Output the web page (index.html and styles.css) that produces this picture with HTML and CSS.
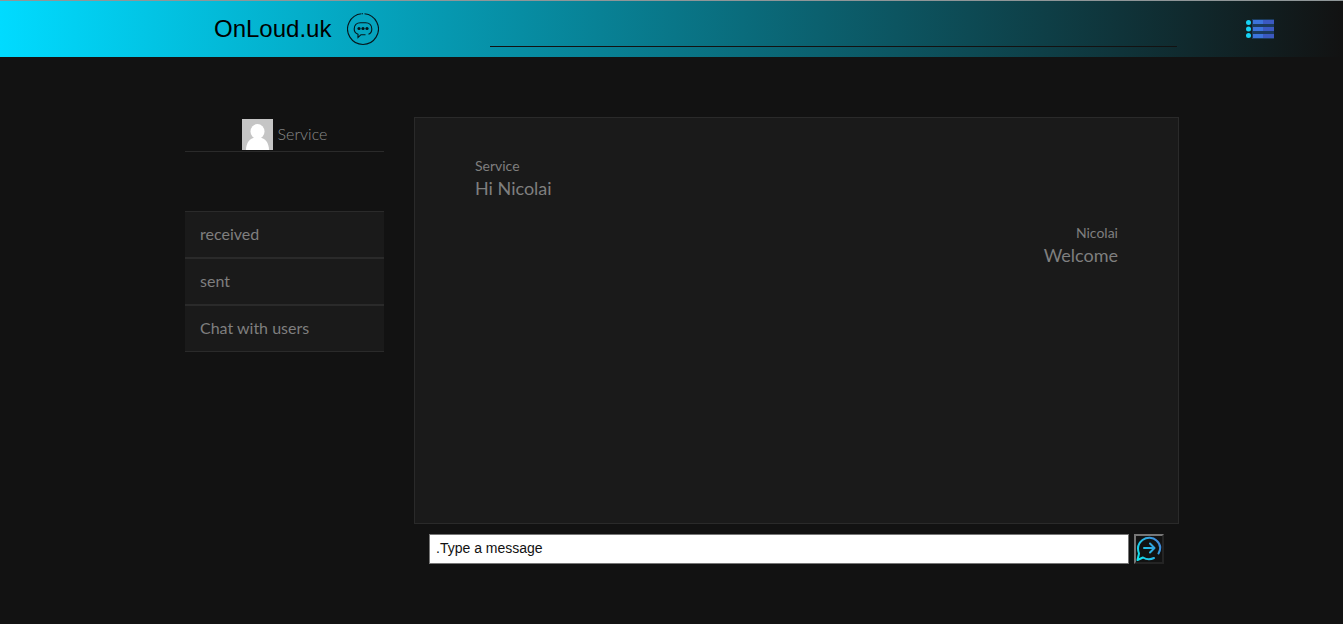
FILE: index.html
```html
<!DOCTYPE html>
<html lang="en">
<head>
<meta charset="utf-8">
<title>OnLoud.uk</title>
<link rel="stylesheet" href="styles.css">
</head>
<body>
<header class="topbar">
  <a class="brand" href="#">
    <span>OnLoud.uk</span>
    <svg width="32" height="32" viewBox="0 0 32 32" fill="none" stroke="#06161b" stroke-width="1.1" aria-hidden="true">
      <path d="M17.5 .7A15.4 15.4 0 1 1 14.5 .7"/>
      <path d="M15 .7h1"/>
      <path d="M18.500 21.700h-4.500l-3 2.800v-3.200C8.500 20.300 7.200 18.300 7.200 16c0-3.700 2.500-6.300 6.300-6.300h5c3.800 0 6.300 2.600 6.300 6.300 0 2.500-1.300 4.500-3.300 5.200"/>
      <g fill="#06161b" stroke="none"><circle cx="12" cy="15.500" r="1.600"/><circle cx="16" cy="15.500" r="1.600"/><circle cx="20" cy="15.500" r="1.600"/></g>
    </svg>
  </a>
  <input class="search" type="text" aria-label="Search">
  <button class="menu" type="button" aria-label="Menu">
    <svg width="28" height="20" viewBox="0 0 28 20" aria-hidden="true">
      <g fill="#1b3a5c"><rect x="6" width="22" height="20"/></g>
      <g fill="#17d2f5"><circle cx="2.500" cy="3.500" r="2.500"/><circle cx="2.500" cy="10" r="2.500"/><circle cx="2.500" cy="16.500" r="2.500"/></g>
      <g fill="#3c73dc"><rect x="7" y="1" width="11" height="4"/><rect x="7" y="8" width="11" height="4"/><rect x="7" y="15" width="11" height="4"/></g>
      <g fill="#3b59c1"><rect x="17" y="1" width="11" height="4"/><rect x="17" y="8" width="11" height="4"/><rect x="17" y="15" width="11" height="4"/></g>
    </svg>
  </button>
</header>
<main class="layout">
  <aside>
    <div class="contact">
      <svg width="31" height="31" viewBox="0 0 31 31" role="img" aria-label="Service avatar">
        <rect width="31" height="31" fill="#c5c5c5"/>
        <ellipse cx="15.500" cy="12.500" rx="7" ry="7.500" fill="#fff"/>
        <path d="M4 31c0-7 4-12 9-12.500h5c5 .5 9 5.500 9 12.500z" fill="#fff"/>
      </svg>
      <span class="name">Service</span>
    </div>
    <nav class="links">
      <a href="#">received</a>
      <a href="#">sent</a>
      <a href="#">Chat with users</a>
    </nav>
  </aside>
  <section class="chat">
    <div class="messages">
      <article class="message">
        <div class="author">Service</div>
        <p class="text">Hi Nicolai</p>
      </article>
      <article class="message mine">
        <div class="author">Nicolai</div>
        <p class="text">Welcome</p>
      </article>
    </div>
    <form class="composer">
      <input class="entry" type="text" placeholder=".Type a message" aria-label="Type a message">
      <button class="send" type="button" aria-label="Send">
        <svg width="26" height="26" viewBox="0 0 26 26" fill="none" stroke="url(#sendTone)" stroke-width="2" stroke-linecap="round" stroke-linejoin="round" aria-hidden="true">
          <defs><linearGradient id="sendTone" gradientUnits="userSpaceOnUse" x1="1" y1="20" x2="25" y2="7"><stop stop-color="#10e4ee"/><stop offset="1" stop-color="#4285db"/></linearGradient></defs>
          <path d="M18 22C14 24 9.500 23 7 21.500L1.500 24L3 17.500C1 12 2.500 7 6.500 4C11 .8 17 1.200 20.500 4.500C24.500 8 25 13 22.500 17.500"/>
          <path d="M8 12h10M14 7.500l4.500 4.500l-4.500 4.500"/>
        </svg>
      </button>
    </form>
  </section>
</main>
</body>
</html>
```
FILE: styles.css
```css
* {
  box-sizing: border-box;
}

body {
  margin: 0;
  min-height: 100vh;
  background: #121212;
  color: #7f7f7f;
  font-family: Lato, sans-serif;
  font-size: 16px;
  line-height: 24px;
}

.topbar {
  display: flex;
  align-items: center;
  height: 57px;
  padding: 0 69px 0 214px;
  border-top: 1px solid #8f9698;
  background: linear-gradient(to right, #00dbff, #121212);
}

.brand {
  display: flex;
  align-items: center;
  gap: 16px;
  margin-right: 111px;
  color: #000;
  font-family: "Liberation Sans", Arial, sans-serif;
  font-size: 24px;
  text-decoration: none;
}

.search {
  flex: 1;
  min-width: 0;
  height: 36px;
  padding: 0 8px;
  border: 0;
  border-bottom: 1px solid #121212;
  background: transparent;
}

.menu {
  margin-left: 69px;
  padding: 0;
  border: 0;
  background: none;
}

svg {
  display: block;
  flex: none;
}

.layout {
  display: grid;
  grid-template-columns: 199px 1fr;
  gap: 30px;
  padding: 60px 164px 60px 185px;
}

.contact {
  display: flex;
  align-items: center;
  justify-content: center;
  gap: 5px;
  padding: 2px 0 1px;
  border-bottom: 1px solid #2a2a2a;
}

.name {
  padding-bottom: 2px;
  color: #8c8c8c;
  font-weight: 300;
}

.links {
  margin-top: 59px;
}

.links a {
  display: block;
  padding: 10px 15px 12px;
  border: solid #2a2a2a;
  border-width: 1px 0;
  background: #1a1a1a;
  color: inherit;
  text-decoration: none;
  line-height: 23px;
}

.messages {
  min-height: 407px;
  padding: 38px 60px;
  border: 1px solid #2a2a2a;
  background: #1a1a1a;
}

.message {
  margin-bottom: 23px;
}

.mine {
  text-align: right;
}

.author {
  font-size: 14px;
  line-height: 20px;
}

.text {
  margin: 0;
  font-size: 18px;
}

.composer {
  display: flex;
  gap: 5px;
  padding: 10px 15px;
}

.entry {
  flex: 1;
  min-width: 0;
  height: 30px;
  padding: 0 6px 2px;
  border: 1px solid #767676;
  background: #fff;
  color: #000;
  font-family: "Liberation Sans", Arial, sans-serif;
  font-size: 14px;
}

.entry::placeholder {
  color: #111;
}

.send {
  width: 30px;
  height: 30px;
  padding: 0;
  border: 2px solid;
  border-color: #767676 #242424 #242424 #767676;
  background: #121212;
}
```
